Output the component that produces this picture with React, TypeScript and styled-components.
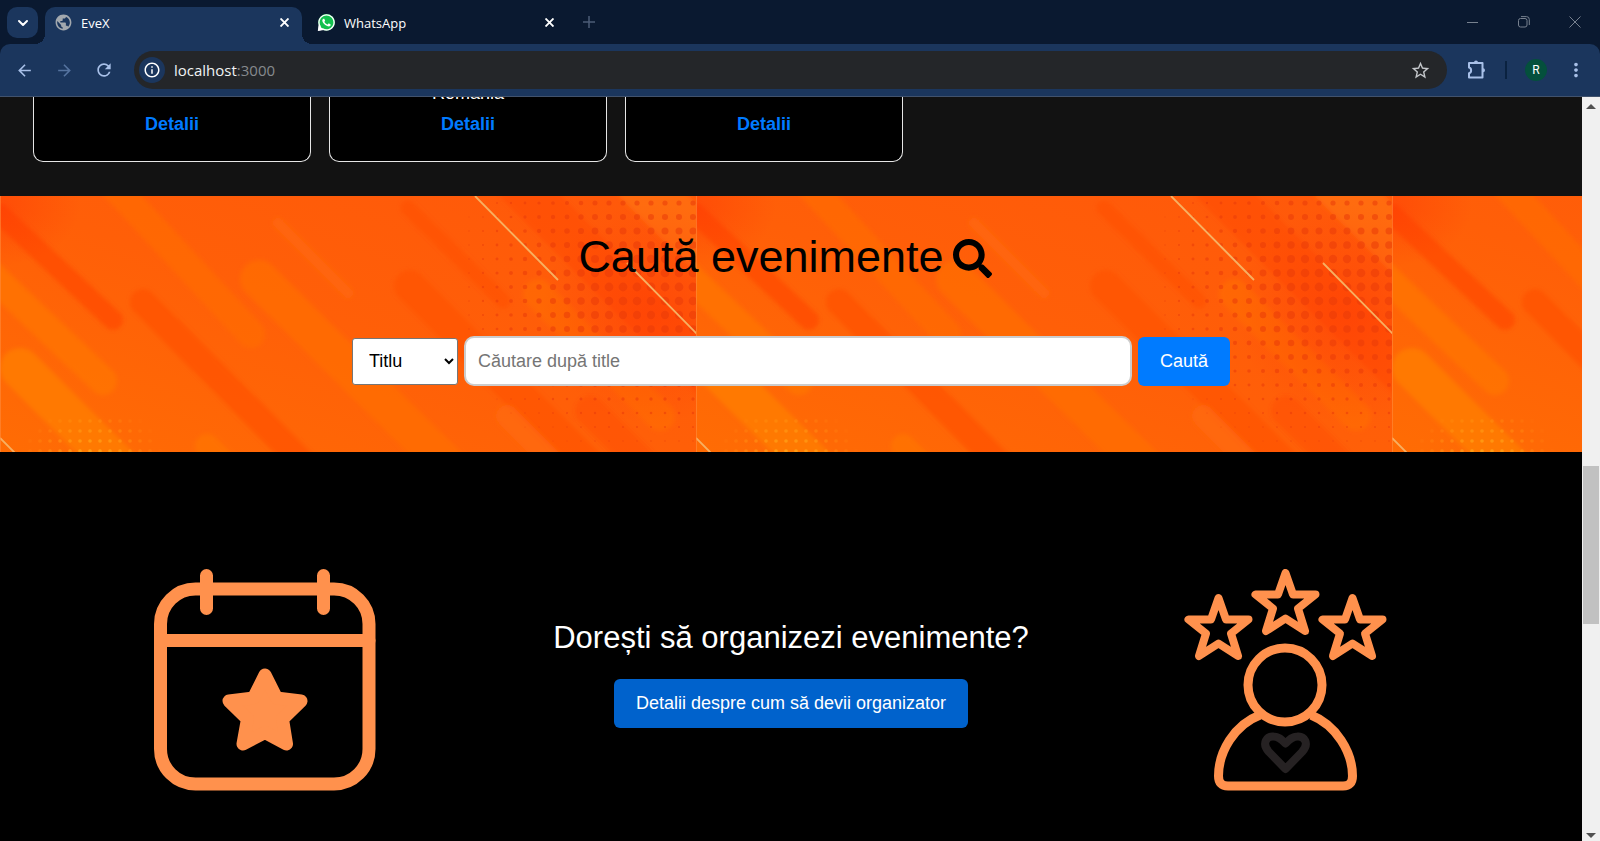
import React from 'react';
import styled, { createGlobalStyle, css } from 'styled-components';
import { ChevronDown } from 'lucide-react';
import { FaSearch, FaWhatsapp } from 'react-icons/fa';
import {
  MdArrowBack,
  MdArrowForward,
  MdInfoOutline,
  MdMoreVert,
  MdPublic,
  MdRefresh,
  MdStarBorder,
} from 'react-icons/md';

const color = {
  strip: '#0a1930',
  toolbar: '#1b365d',
  omnibox: '#242629',
  icon: '#a8c0e8',
  iconDim: '#55739f',
  page: '#121212',
  blue: '#007bff',
  blueDark: '#0062cc',
  orange: '#ff914d',
};

const GlobalStyle = createGlobalStyle`
  *, *::before, *::after { box-sizing: border-box; }
  body {
    margin: 0;
    background: #000;
    color: #fff;
    font-family: 'Liberation Sans', Arial, sans-serif;
    font-size: 18px;
  }
  button, input, select { font: inherit; }
  svg { display: block; flex: none; }
`;

const Window = styled.div`
  display: flex;
  flex-direction: column;
  height: 100vh;
  overflow: hidden;
`;

/* ---------- Browser frame ---------- */

const TabStrip = styled.div`
  display: flex;
  flex: none;
  height: 44px;
  padding: 7px 0 0 7px;
  background: ${color.strip};
  font-family: 'Open Sans', 'Noto Sans', sans-serif;
  font-size: 13px;
`;

const ChromeButton = styled.button<{ $size?: number }>`
  display: flex;
  flex: none;
  align-items: center;
  justify-content: center;
  width: ${(p) => p.$size ?? 40}px;
  height: ${(p) => p.$size ?? 40}px;
  padding: 0;
  border: 0;
  border-radius: 10px;
  background: none;
  color: ${color.icon};
`;

const TabSearch = styled(ChromeButton)`
  margin-right: 7px;
  background: ${color.toolbar};
  color: #fff;
`;

const flare = css`
  content: '';
  position: absolute;
  bottom: 0;
  width: 10px;
  height: 10px;
`;

const Tab = styled.div<{ $active?: boolean }>`
  position: relative;
  display: flex;
  align-items: center;
  width: ${(p) => (p.$active ? 257 : 265)}px;
  height: 37px;
  padding: 0 8px 6px ${(p) => (p.$active ? 9 : 15)}px;
  border-radius: 10px 10px 0 0;
  gap: 8px;
  ${(p) =>
    p.$active &&
    css`
      background: ${color.toolbar};
      &::before {
        ${flare}
        left: -10px;
        background: radial-gradient(circle at 0 0, transparent 10px, ${color.toolbar} 10px);
      }
      &::after {
        ${flare}
        right: -10px;
        background: radial-gradient(circle at 100% 0, transparent 10px, ${color.toolbar} 10px);
      }
    `}
`;

const TabTitle = styled.span`
  flex: 1;
`;

const CloseTab = styled(ChromeButton)`
  color: #fff;
`;

const NewTab = styled(ChromeButton)`
  margin-left: 7px;
  color: #4c5c76;
`;

const WindowControls = styled.div`
  display: flex;
  margin-left: auto;
  color: #77818f;
`;

const WindowButton = styled(ChromeButton)`
  width: 51px;
  height: 30px;
  color: inherit;
`;

const ToolbarWrap = styled.div`
  flex: none;
  background: ${color.strip};
`;

const Toolbar = styled.div`
  display: flex;
  align-items: center;
  height: 53px;
  padding: 0 4px;
  border-bottom: 1px solid #41526c;
  border-radius: 10px 10px 0 0;
  background: ${color.toolbar};
`;

const Omnibox = styled.form`
  display: flex;
  flex: 1;
  align-items: center;
  height: 38px;
  margin: 0 9px 0 10px;
  padding: 0 7px 0 5px;
  border-radius: 19px;
  background: ${color.omnibox};
  font-family: 'Open Sans', 'Noto Sans', sans-serif;
  font-size: 15px;
`;

const SiteInfo = styled(ChromeButton)`
  border-radius: 50%;
  background: ${color.toolbar};
  color: #fff;
`;

const Address = styled.span`
  flex: 1;
  margin-left: 9px;
  color: #868a8e;
`;

const Host = styled.span`
  color: #f1f3f4;
`;

const Separator = styled.span`
  width: 2px;
  height: 18px;
  margin: 0 9px;
  background: #0a2240;
`;

const Avatar = styled.span`
  display: flex;
  align-items: center;
  justify-content: center;
  width: 22px;
  height: 22px;
  border-radius: 50%;
  background: #04503c;
  color: #fff;
  font-family: Roboto, sans-serif;
  font-size: 12px;
`;

const Viewport = styled.div`
  display: flex;
  flex: 1;
  min-height: 0;
`;

const Page = styled.main`
  flex: 1;
  min-width: 0;
  overflow: hidden;
  background: #000;
`;

const Scrollbar = styled.div`
  display: grid;
  flex: none;
  grid-template-rows: 18px 348fr 157fr 203fr 12px;
  width: 18px;
  padding: 0 1px;
  background: #f0f0f0;
`;

const ScrollArrow = styled.span<{ $down?: boolean }>`
  grid-row: ${(p) => (p.$down ? 5 : 1)};
  place-self: center;
  border: 5px solid transparent;
  border-top: ${(p) => (p.$down ? '5px solid #505050' : '0')};
  border-bottom: ${(p) => (p.$down ? '0' : '5px solid #505050')};
`;

const ScrollThumb = styled.span`
  grid-row: 3;
  background: #c1c1c1;
`;

/* ---------- Page sections ---------- */

const EventRow = styled.section`
  display: flex;
  gap: 18px;
  padding: 0 33px 34px;
  background: ${color.page};
`;

const EventCard = styled.article`
  display: flex;
  flex-direction: column;
  align-items: center;
  justify-content: flex-end;
  width: 278px;
  height: 65px;
  padding-bottom: 26px;
  border: 1px solid #e6e6e6;
  border-top: 0;
  border-radius: 0 0 10px 10px;
  background: #000;
  overflow: hidden;
  line-height: 22px;
`;

const EventPlace = styled.p`
  margin: 0 0 9px;
`;

const DetailsLink = styled.a`
  color: ${color.blue};
  font-weight: bold;
  text-decoration: none;
`;

const SearchSection = styled.section`
  position: relative;
  padding: 35px 20px 66px;
  background: #ff5f08;
  color: #000;
`;

const Backdrop = styled.svg`
  position: absolute;
  inset: 0;
  width: 100%;
  height: 100%;
`;

const SearchTitle = styled.h1`
  position: relative;
  display: flex;
  align-items: center;
  justify-content: center;
  gap: 9px;
  margin: 0 0 54px;
  padding-right: 12px;
  font-size: 45px;
  font-weight: normal;
  line-height: 51px;
`;

const TitleIcon = styled.span`
  padding-top: 4px;
`;

const SearchForm = styled.form`
  position: relative;
  display: flex;
  align-items: center;
  gap: 6px;
  max-width: 878px;
  margin: 0 auto;
`;

const FieldSelect = styled.select`
  width: 106px;
  height: 47px;
  padding: 0 0 0 12px;
  border: 1px solid #767676;
  border-radius: 3px;
  background: #fff;
  color: #000;
`;

const SearchInput = styled.input`
  flex: 1;
  min-width: 0;
  height: 50px;
  padding: 0 12px;
  border: 2px solid #ccc;
  border-radius: 10px;
  background: #fff;
  color: #000;
  &::placeholder { color: #757575; }
`;

const ActionButton = styled.button<{ $dark?: boolean }>`
  height: 49px;
  padding: 0 22px;
  border: 0;
  border-radius: 6px;
  background: ${(p) => (p.$dark ? color.blueDark : color.blue)};
  color: #fff;
`;

const OrganizerSection = styled.section`
  display: grid;
  grid-template-columns: 1fr auto 1fr;
  align-items: center;
  padding: 117px 0;
  background: #000;
`;

const Illustration = styled.div<{ $inset: number }>`
  display: flex;
  justify-content: center;
  padding-right: ${(p) => p.$inset}px;
`;

const Pitch = styled.div`
  display: flex;
  flex-direction: column;
  align-items: center;
  gap: 23px;
  padding-bottom: 12px;
`;

const PitchTitle = styled.h2`
  margin: 0;
  font-size: 31px;
  font-weight: normal;
  line-height: 36px;
`;

/* ---------- Drawings ---------- */

type Streak = [number, number, number, number, number, string, number?];

const streaks: Streak[] = [
  [0, 18, 113, 124, 20, '#ff4a02', 0.75],
  [110, -14, 251, 138, 28, '#ff6d0a', 0.65],
  [278, 27, 348, 97, 11, '#ff6c0c', 0.6],
  [259, 83, 450, 272, 38, '#ff6e09', 0.7],
  [143, 106, 310, 274, 26, '#ff5202', 0.75],
  [-10, 78, 103, 185, 28, '#ff7604', 0.75],
  [20, 172, 125, 277, 40, '#ff7e00', 0.8],
  [207, 250, 240, 283, 24, '#ff7608', 0.7],
  [408, 12, 503, 105, 15, '#ff5005', 0.6],
  [410, 90, 590, 270, 32, '#ff5205', 0.65],
  [507, 220, 560, 273, 22, '#ff6b0c', 0.7],
  [520, -10, 710, 180, 44, '#ff4508', 0.4],
  [640, -14, 710, 56, 50, '#ff7414', 0.7],
  [538, 98, 660, 220, 30, '#ff720c', 0.5],
  [590, 215, 650, 275, 30, '#ff4206', 0.3],
];

const halftone: { x: number; y: number; r: number }[] = [];
for (let x = 469; x < 704; x += 14) {
  for (let y = 7; y < 256; y += 14) {
    const across = Math.min(1, Math.max(0, (x - 440) / 160));
    const down = Math.exp(-(((y - 90) / 115) ** 2));
    const r = 4.4 * across * down;
    if (r > 0.5) halftone.push({ x, y, r });
  }
}

const sparkle: { x: number; y: number; o: number }[] = [];
for (let x = 20; x < 170; x += 10) {
  for (let y = 225; y < 262; y += 10) {
    const o = 0.8 - Math.hypot((x - 92) / 90, (y - 262) / 65);
    if (o > 0) sparkle.push({ x, y, o });
  }
}

const OrangeBackdrop = () => (
  <Backdrop aria-hidden="true">
    <defs>
      <linearGradient id="base" x1="0" y1="1" x2="1" y2="0">
        <stop offset="0" stopColor="#ff6c04" />
        <stop offset="0.5" stopColor="#ff5f08" />
        <stop offset="1" stopColor="#ff580a" />
      </linearGradient>
      <radialGradient id="heat">
        <stop offset="0" stopColor="#ff3606" stopOpacity="0.45" />
        <stop offset="1" stopColor="#ff3606" stopOpacity="0" />
      </radialGradient>
      <filter id="soft" x="-5%" y="-5%" width="110%" height="110%">
        <feGaussianBlur stdDeviation="2" />
      </filter>
      <pattern id="tile" width="696" height="257" patternUnits="userSpaceOnUse">
        <rect width="696" height="257" fill="url(#base)" />
        <g strokeLinecap="round" filter="url(#soft)">
          {streaks.map(([x1, y1, x2, y2, w, stroke, o], i) => (
            <line key={i} x1={x1} y1={y1} x2={x2} y2={y2} strokeWidth={w} stroke={stroke} opacity={o} />
          ))}
        </g>
        <ellipse cx="0" cy="10" rx="80" ry="60" fill="url(#heat)" />
        <ellipse cx="652" cy="118" rx="110" ry="110" fill="url(#heat)" />
        {halftone.map((d, i) => (
          <circle key={i} cx={d.x} cy={d.y} r={d.r} fill="#e83a08" opacity="0.55" />
        ))}
        {sparkle.map((d, i) => (
          <circle key={i} cx={d.x} cy={d.y} r="1.8" fill="#ffb01e" opacity={d.o} />
        ))}
        <g stroke="#f7b061" strokeWidth="1.8">
          <path d="M475 0L558 84M627 67L697 138M0 242L16 258" />
        </g>
        <path d="M0.5 0V257" stroke="#ff8a3c" strokeWidth="1" opacity="0.6" />
      </pattern>
    </defs>
    <rect width="100%" height="100%" fill="url(#tile)" />
  </Backdrop>
);

const CalendarDrawing = () => (
  <svg width="222" height="222" viewBox="0 0 222 222" fill="none" stroke={color.orange} strokeWidth="13" strokeLinecap="round">
    <rect x="6.5" y="20" width="208.5" height="195" rx="35" />
    <path d="M7 71.5H215M52.5 6.5V39.5M169.5 6.5V39.5" />
    <path
      d="M111 106L122.5 129L147 132L128.5 150L132.5 175L111 163.5L89 175L93.5 150L75 132L99.5 129Z"
      fill={color.orange}
      strokeLinejoin="round"
    />
  </svg>
);

const starPath = 'M0 -29L7.5 -7.5H30L12.5 6.5L19.5 29L0 16.5L-19.5 29L-12.5 6.5L-30 -7.5H-7.5Z';

const OrganizerDrawing = () => (
  <svg width="203" height="222" viewBox="0 0 203 222" fill="none" stroke={color.orange} strokeLinejoin="round" strokeLinecap="round">
    <g strokeWidth="8">
      <path d={starPath} transform="translate(101.5 33)" />
      <path d={starPath} transform="translate(34.5 58)" />
      <path d={starPath} transform="translate(168.5 58)" />
    </g>
    <circle cx="101" cy="116" r="37" strokeWidth="9" />
    <path
      d="M76 146C50 156 34.5 183 34.5 207Q34.5 217 44 217H159Q168.5 217 168.5 207C168.5 183 152 156 127 146"
      strokeWidth="9"
      strokeLinecap="butt"
    />
    <path
      d="M101.5 200L85 183C77 174 83 167 89.5 167.500C95 167.5 98 171 101.5 174.500C105 171 108 167.5 113.5 167.500C120 167 126 174 118 183Z"
      stroke="#262223"
      strokeWidth="8"
    />
  </svg>
);

const PuzzleIcon = () => (
  <svg width="20" height="20" viewBox="0 0 20 20" fill="none" stroke="currentColor" strokeWidth="2" strokeLinejoin="round">
    <path d="M3 3H16.5V17.5H3V13.200C5.8 12.6 5.8 8.2 3 7.600Z" />
    <path d="M8 2.600A2 2 0 0 1 12 2.600ZM17 8.200A2 2 0 0 1 17 12.200Z" fill="currentColor" stroke="none" />
  </svg>
);

const WhatsAppIcon = () => (
  <svg width="19" height="19" viewBox="0 0 19 19" color="#fff">
    <circle cx="9.5" cy="9.3" r="8.3" fill="#12c04d" />
    <path d="M1.5 12L0.8 18L7 17Z" fill="#fff" />
    <FaWhatsapp size={19} />
  </svg>
);

const CrossIcon = () => (
  <svg width="9" height="9" viewBox="0 0 9 9" stroke="currentColor" strokeWidth="1.9">
    <path d="M0.5 0.5L8.5 8.5M8.5 0.5L0.5 8.5" />
  </svg>
);

const MinimizeIcon = () => (
  <svg width="12" height="12" viewBox="0 0 12 12" stroke="currentColor">
    <path d="M0 6.500H11" />
  </svg>
);

const RestoreIcon = () => (
  <svg width="12" height="12" viewBox="0 0 12 12" fill="none" stroke="currentColor">
    <rect x="0.5" y="2.5" width="8.5" height="8.5" rx="2" />
    <path d="M3 0.600H8.500Q11.3 0.6 11.3 3.500V9" />
  </svg>
);

const ExitIcon = () => (
  <svg width="12" height="12" viewBox="0 0 12 12" stroke="currentColor">
    <path d="M0.5 0.5L11.5 11.500M11.5 0.5L0.5 11.500" />
  </svg>
);

const PlusIcon = () => (
  <svg width="12" height="12" viewBox="0 0 12 12" stroke="currentColor" strokeWidth="1.5">
    <path d="M6 0V12M0 6H12" />
  </svg>
);

const events: { id: number; place?: string }[] = [{ id: 1 }, { id: 2, place: 'România' }, { id: 3 }];

export default function App() {
  return (
    <Window>
      <GlobalStyle />
      <TabStrip>
        <TabSearch $size={31} aria-label="Search tabs">
          <ChevronDown size={16} strokeWidth={3} />
        </TabSearch>
        <Tab $active>
          <MdPublic size={19} color="#a2a8ae" />
          <TabTitle>EveX</TabTitle>
          <CloseTab $size={20} aria-label="Close EveX">
            <CrossIcon />
          </CloseTab>
        </Tab>
        <Tab>
          <WhatsAppIcon />
          <TabTitle>WhatsApp</TabTitle>
          <CloseTab $size={20} aria-label="Close WhatsApp">
            <CrossIcon />
          </CloseTab>
        </Tab>
        <NewTab $size={30} aria-label="New tab">
          <PlusIcon />
        </NewTab>
        <WindowControls>
          <WindowButton aria-label="Minimize"><MinimizeIcon /></WindowButton>
          <WindowButton aria-label="Restore"><RestoreIcon /></WindowButton>
          <WindowButton aria-label="Close"><ExitIcon /></WindowButton>
        </WindowControls>
      </TabStrip>

      <ToolbarWrap>
        <Toolbar>
          <ChromeButton aria-label="Back"><MdArrowBack size={19} /></ChromeButton>
          <ChromeButton aria-label="Forward"><MdArrowForward size={19} color={color.iconDim} /></ChromeButton>
          <ChromeButton aria-label="Reload"><MdRefresh size={20} /></ChromeButton>
          <Omnibox>
            <SiteInfo type="button" $size={26} aria-label="Site information"><MdInfoOutline size={18} /></SiteInfo>
            <Address><Host>localhost</Host>:3000</Address>
            <ChromeButton type="button" aria-label="Bookmark"><MdStarBorder size={21} color="#c4c7cb" /></ChromeButton>
          </Omnibox>
          <ChromeButton aria-label="Extensions"><PuzzleIcon /></ChromeButton>
          <Separator />
          <ChromeButton aria-label="Profile"><Avatar>R</Avatar></ChromeButton>
          <ChromeButton aria-label="Menu"><MdMoreVert size={22} /></ChromeButton>
        </Toolbar>
      </ToolbarWrap>

      <Viewport>
        <Page>
          <EventRow>
            {events.map((event) => (
              <EventCard key={event.id}>
                {event.place && <EventPlace>{event.place}</EventPlace>}
                <DetailsLink href="#">Detalii</DetailsLink>
              </EventCard>
            ))}
          </EventRow>

          <SearchSection>
            <OrangeBackdrop />
            <SearchTitle>
              Caută evenimente
              <TitleIcon><FaSearch size={39} /></TitleIcon>
            </SearchTitle>
            <SearchForm>
              <FieldSelect aria-label="Câmp" defaultValue="title">
                <option value="title">Titlu</option>
              </FieldSelect>
              <SearchInput type="text" aria-label="Căutare" placeholder="Căutare după title" />
              <ActionButton type="button">Caută</ActionButton>
            </SearchForm>
          </SearchSection>

          <OrganizerSection>
            <Illustration $inset={24}><CalendarDrawing /></Illustration>
            <Pitch>
              <PitchTitle>Dorești să organizezi evenimente?</PitchTitle>
              <ActionButton type="button" $dark>Detalii despre cum să devii organizator</ActionButton>
            </Pitch>
            <Illustration $inset={40}><OrganizerDrawing /></Illustration>
          </OrganizerSection>
        </Page>
        <Scrollbar aria-hidden="true">
          <ScrollArrow />
          <ScrollThumb />
          <ScrollArrow $down />
        </Scrollbar>
      </Viewport>
    </Window>
  );
}
